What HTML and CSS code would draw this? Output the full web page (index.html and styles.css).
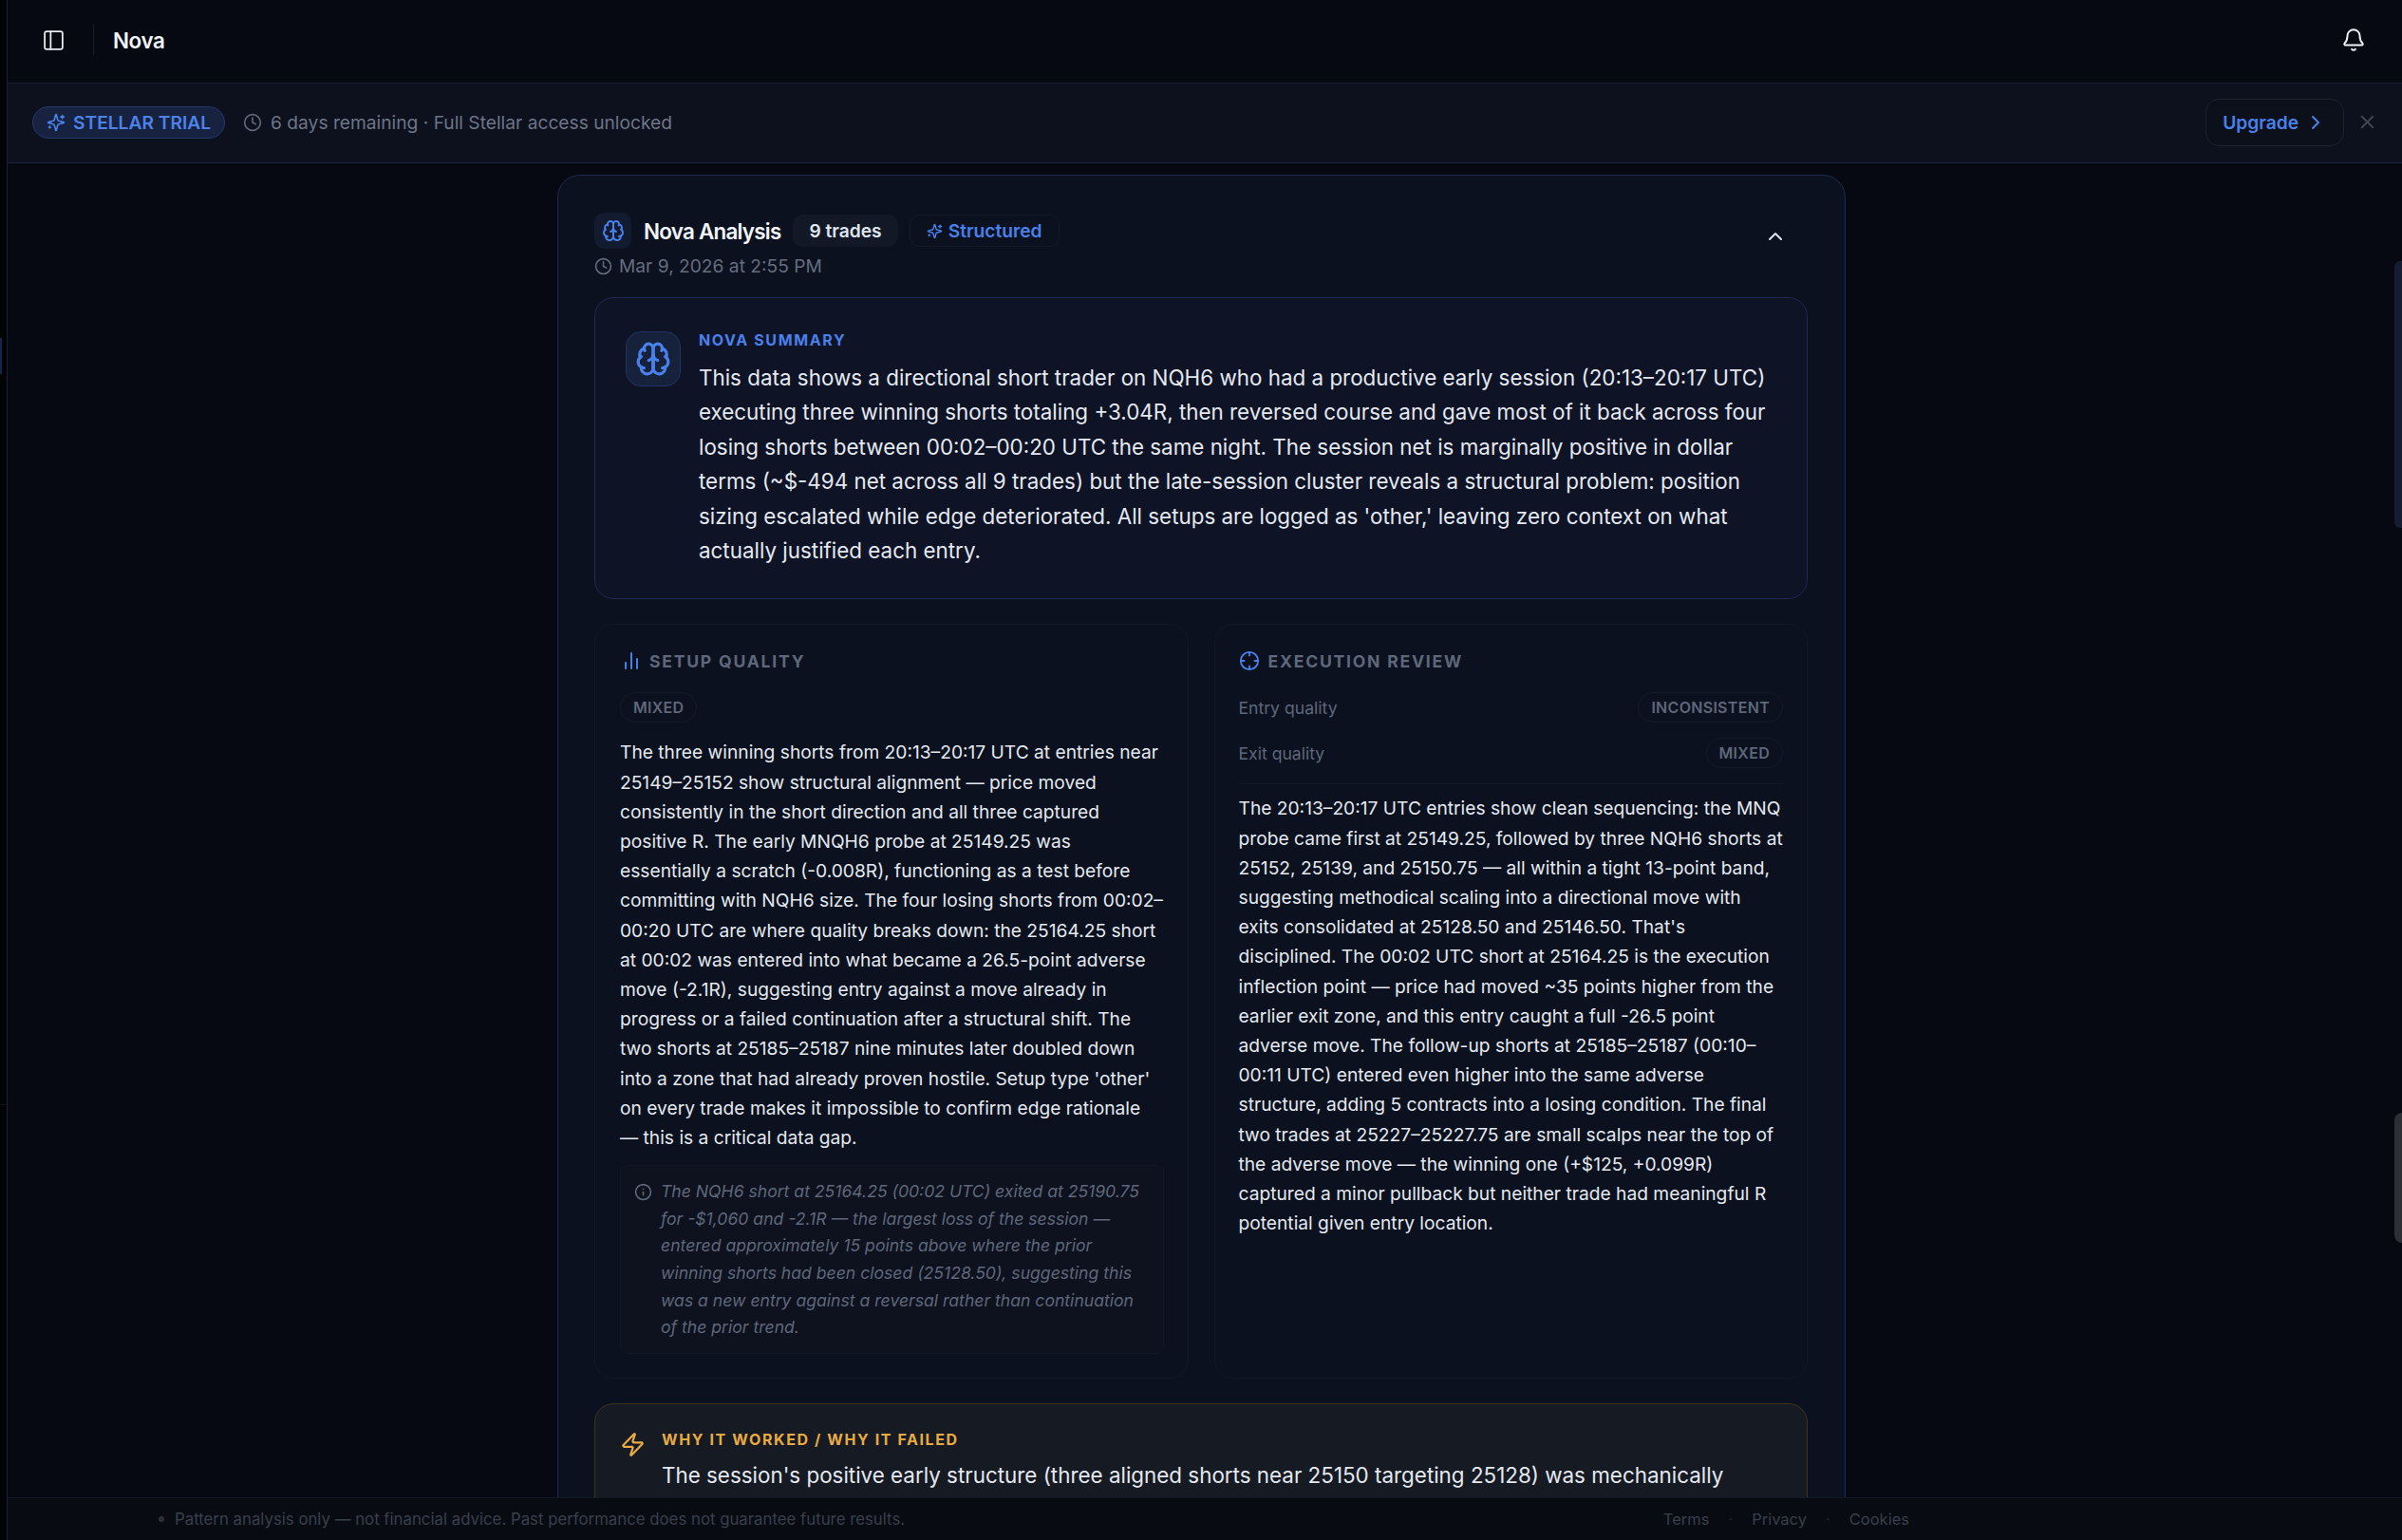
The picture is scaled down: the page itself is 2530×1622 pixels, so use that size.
FILE: index.html
```html
<!DOCTYPE html>
<html lang="en">
<head>
<meta charset="utf-8">
<title>Nova</title>
<link rel="stylesheet" href="styles.css">
</head>
<body>
<svg class="sprite" xmlns="http://www.w3.org/2000/svg">
  <symbol id="i-panel" viewBox="0 0 24 24"><rect x="3" y="3" width="18" height="18" rx="2"/><path d="M9 3v18"/></symbol>
  <symbol id="i-bell" viewBox="0 0 24 24"><path d="M10.268 21a2 2 0 0 0 3.464 0"/><path d="M3.262 15.326A1 1 0 0 0 4 17h16a1 1 0 0 0 .74-1.673C19.41 13.956 18 12.499 18 8A6 6 0 0 0 6 8c0 4.499-1.411 5.956-2.738 7.326"/></symbol>
  <symbol id="i-sparkles" viewBox="0 0 24 24"><path d="M9.937 15.5A2 2 0 0 0 8.5 14.063l-6.135-1.582a.5.5 0 0 1 0-.962L8.5 9.936A2 2 0 0 0 9.937 8.5l1.582-6.135a.5.5 0 0 1 .963 0L14.063 8.5A2 2 0 0 0 15.5 9.937l6.135 1.581a.5.5 0 0 1 0 .964L15.5 14.063a2 2 0 0 0-1.437 1.437l-1.582 6.135a.5.5 0 0 1-.963 0z"/><path d="M20 3v4"/><path d="M22 5h-4"/><path d="M4 17v2"/><path d="M5 18H3"/></symbol>
  <symbol id="i-clock" viewBox="0 0 24 24"><circle cx="12" cy="12" r="10"/><path d="M12 6v6l4 2"/></symbol>
  <symbol id="i-right" viewBox="0 0 24 24"><path d="m9 18 6-6-6-6"/></symbol>
  <symbol id="i-up" viewBox="0 0 24 24"><path d="m18 15-6-6-6 6"/></symbol>
  <symbol id="i-x" viewBox="0 0 24 24"><path d="M18 6 6 18"/><path d="m6 6 12 12"/></symbol>
  <symbol id="i-brain" viewBox="0 0 24 24"><path d="M12 5a3 3 0 1 0-5.997.125 4 4 0 0 0-2.526 5.77 4 4 0 0 0 .556 6.588A4 4 0 1 0 12 18Z"/><path d="M12 5a3 3 0 1 1 5.997.125 4 4 0 0 1 2.526 5.77 4 4 0 0 1-.556 6.588A4 4 0 1 1 12 18Z"/><path d="M15 13a4.5 4.5 0 0 1-3-4 4.5 4.5 0 0 1-3 4"/><path d="M17.599 6.5a3 3 0 0 0 .399-1.375"/><path d="M6.003 5.125A3 3 0 0 0 6.401 6.5"/><path d="M3.477 10.896a4 4 0 0 1 .585-.396"/><path d="M19.938 10.5a4 4 0 0 1 .585.396"/><path d="M6 18a4 4 0 0 1-1.967-.516"/><path d="M19.967 17.484A4 4 0 0 1 18 18"/><path d="M12 9v9"/></symbol>
  <symbol id="i-chart" viewBox="0 0 24 24"><path d="M18 20V10"/><path d="M12 20V4"/><path d="M6 20v-6"/></symbol>
  <symbol id="i-cross" viewBox="0 0 24 24"><circle cx="12" cy="12" r="10"/><path d="M22 12h-4"/><path d="M6 12H2"/><path d="M12 6V2"/><path d="M12 22v-4"/></symbol>
  <symbol id="i-info" viewBox="0 0 24 24"><circle cx="12" cy="12" r="10"/><path d="M12 16v-4"/><path d="M12 8h.01"/></symbol>
  <symbol id="i-zap" viewBox="0 0 24 24"><path d="M4 14a1 1 0 0 1-.78-1.63l9.9-10.2a.5.5 0 0 1 .86.46l-1.92 6.02A1 1 0 0 0 13 10h7a1 1 0 0 1 .78 1.63l-9.9 10.2a.5.5 0 0 1-.86-.46l1.92-6.02A1 1 0 0 0 11 14z"/></symbol>
</svg>

<div class="app">
  <aside class="rail"><span class="rail-mark"></span><span class="rail-line"></span></aside>
  <div class="shell">
    <header class="topbar">
      <div class="topbar-left">
        <svg class="ic ic-panel"><use href="#i-panel"/></svg>
        <span class="divider"></span>
        <span class="page-title">Nova</span>
      </div>
      <svg class="ic ic-bell"><use href="#i-bell"/></svg>
    </header>

    <div class="trial">
      <div class="trial-left">
        <span class="trial-pill"><svg class="ic ic-pill"><use href="#i-sparkles"/></svg>STELLAR TRIAL</span>
        <svg class="ic ic-clock"><use href="#i-clock"/></svg>
        <span class="trial-text">6 days remaining · Full Stellar access unlocked</span>
      </div>
      <div class="trial-right">
        <button class="upgrade">Upgrade<svg class="ic ic-right"><use href="#i-right"/></svg></button>
        <svg class="ic ic-x"><use href="#i-x"/></svg>
      </div>
    </div>

    <main class="scroll">
      <article class="card">
        <div class="card-head">
          <div>
            <div class="head-row">
              <span class="head-icon"><svg class="ic ic-brain-sm"><use href="#i-brain"/></svg></span>
              <span class="head-title">Nova Analysis</span>
              <span class="tag tag-fill">9 trades</span>
              <span class="tag tag-line"><svg class="ic ic-tag"><use href="#i-sparkles"/></svg>Structured</span>
            </div>
            <div class="date"><svg class="ic ic-date"><use href="#i-clock"/></svg>Mar 9, 2026 at 2:55 PM</div>
          </div>
          <svg class="ic ic-up"><use href="#i-up"/></svg>
        </div>

        <section class="summary">
          <span class="summary-icon"><svg class="ic ic-brain-lg"><use href="#i-brain"/></svg></span>
          <div>
            <div class="label label-blue">NOVA SUMMARY</div>
            <p class="lead">This data shows a directional short trader on NQH6 who had a productive early session (20:13–20:17 UTC) executing three winning shorts totaling +3.04R, then reversed course and gave most of it back across four losing shorts between 00:02–00:20 UTC the same night. The session net is marginally positive in dollar terms (~$-494 net across all 9 trades) but the late-session cluster reveals a structural problem: position sizing escalated while edge deteriorated. All setups are logged as 'other,' leaving zero context on what actually justified each entry.</p>
          </div>
        </section>

        <div class="columns">
          <section class="panel">
            <h3 class="panel-title"><svg class="ic ic-section"><use href="#i-chart"/></svg>SETUP QUALITY</h3>
            <div class="badge-row"><span class="badge">MIXED</span></div>
            <p class="body">The three winning shorts from 20:13–20:17 UTC at entries near 25149–25152 show structural alignment — price moved consistently in the short direction and all three captured positive R. The early MNQH6 probe at 25149.25 was essentially a scratch (-0.008R), functioning as a test before committing with NQH6 size. The four losing shorts from 00:02–00:20 UTC are where quality breaks down: the 25164.25 short at 00:02 was entered into what became a 26.5-point adverse move (-2.1R), suggesting entry against a move already in progress or a failed continuation after a structural shift. The two shorts at 25185–25187 nine minutes later doubled down into a zone that had already proven hostile. Setup type 'other' on every trade makes it impossible to confirm edge rationale —&nbsp;this is a critical data gap.</p>
            <div class="note">
              <svg class="ic ic-info"><use href="#i-info"/></svg>
              <p>The NQH6 short at 25164.25 (00:02 UTC) exited at 25190.75 for -$1,060 and -2.1R — the largest loss of the session — entered approximately 15 points above where the prior winning shorts had been closed (25128.50), suggesting this was a new entry against a reversal rather than continuation of the prior trend.</p>
            </div>
          </section>

          <section class="panel">
            <h3 class="panel-title"><svg class="ic ic-section ic-cross"><use href="#i-cross"/></svg>EXECUTION REVIEW</h3>
            <div class="quality-row"><span>Entry quality</span><span class="badge">INCONSISTENT</span></div>
            <div class="quality-row"><span>Exit quality</span><span class="badge">MIXED</span></div>
            <p class="body body-ruled">The 20:13–20:17 UTC entries show clean sequencing: the MNQ probe came first at 25149.25, followed by three NQH6 shorts at 25152, 25139, and 25150.75 — all within a tight 13-point band, suggesting methodical scaling into a directional move with exits consolidated at 25128.50 and 25146.50. That's disciplined. The 00:02 UTC short at 25164.25 is the execution inflection point — price had moved ~35 points higher from the earlier exit zone, and this entry caught a full -26.5 point adverse move. The follow-up shorts at 25185–25187 (00:10–00:11 UTC) entered even higher into the same adverse structure, adding 5 contracts into a losing condition. The final two trades at 25227–25227.75 are small scalps near the top of the adverse move — the winning one (+$125, +0.099R) captured a minor pullback but neither trade had meaningful R potential given entry location.</p>
          </section>
        </div>

        <section class="why">
          <svg class="ic ic-zap"><use href="#i-zap"/></svg>
          <div>
            <div class="label label-amber">WHY IT WORKED / WHY IT FAILED</div>
            <p class="lead">The session's positive early structure (three aligned shorts near 25150 targeting 25128) was mechanically</p>
          </div>
        </section>
      </article>
    </main>

    <footer class="footer">
      <div class="disclaimer"><span class="dot"></span>Pattern analysis only — not financial advice. Past performance does not guarantee future results.</div>
      <nav class="links"><span>Terms</span><i>·</i><span>Privacy</span><i>·</i><span>Cookies</span></nav>
    </footer>
  </div>
  <span class="thumb thumb-a"></span>
  <span class="thumb thumb-b"></span>
</div>
</body>
</html>
```

FILE: styles.css
```css
* { box-sizing: border-box; }
html, body { margin: 0; height: 100%; }
body { background: #060911; color: #f1f4fa; font-family: Inter, "Liberation Sans", sans-serif; overflow: hidden; }
.sprite { position: absolute; width: 0; height: 0; }
.ic { fill: none; stroke: currentColor; stroke-width: 2; stroke-linecap: round; stroke-linejoin: round; flex: none; display: block; }

.app { display: flex; height: 1622px; position: relative; }
.rail { width: 8px; background: #020306; border-right: 1px solid #1a2030; flex: none; position: relative; }
.rail-mark { position: absolute; left: 0; top: 356px; width: 2px; height: 38px; background: #14254d; }
.rail-line { position: absolute; left: 0; right: 0; top: 1163px; height: 1px; background: #0c101a; }
.shell { flex: 1; min-width: 0; display: flex; flex-direction: column; }

.topbar { height: 88px; flex: none; display: flex; align-items: center; justify-content: space-between; padding: 0 38px 3px 36px; border-bottom: 1px solid #171d2e; }
.topbar-left { display: flex; align-items: center; }
.ic-panel { width: 25px; height: 25px; color: #e8ecf3; stroke-width: 1.7; }
.divider { width: 1px; height: 32px; background: #171d2e; margin: 0 20px 0 29px; }
.page-title { font-size: 22.4px; font-weight: 600; letter-spacing: -0.4px; }
.ic-bell { width: 26px; height: 26px; color: #eef1f6; stroke-width: 1.8; }

.trial { height: 84px; flex: none; display: flex; align-items: center; justify-content: space-between; padding: 0 25px 2px 26px; background: #0c111d; border-bottom: 1px solid #1a2338; }
.trial-left, .trial-right { display: flex; align-items: center; }
.trial-pill { display: flex; align-items: center; height: 34px; padding: 0 14px 0 14px; border-radius: 17px; border: 1px solid #26396a; background: #16223f; color: #4c82e9; font-size: 19.2px; font-weight: 600; }
.ic-pill { width: 20px; height: 20px; margin-right: 8px; }
.ic-clock { width: 20px; height: 20px; color: #5e6678; margin: 0 9px 0 19px; }
.trial-text { font-size: 19.2px; color: #6d7587; }
.upgrade { display: flex; align-items: center; height: 50px; padding: 0 17px; background: #0b101b; border: 1px solid #1c2230; border-radius: 14px; color: #4a80ea; font: 600 19.2px Inter, sans-serif; }
.ic-right { width: 24px; height: 24px; margin-left: 6px; }
.ic-x { width: 23px; height: 23px; color: #3f4553; margin-left: 13px; }

.scroll { flex: 1; min-height: 0; overflow: hidden; padding-top: 12px; display: flex; justify-content: center; }
.card { width: 1357px; margin-left: -7px; flex: none; align-self: flex-start; padding: 39px 39px 40px 38px; background: #0b111e; border: 1px solid #1c2a4d; border-radius: 24px; }

.card-head { display: flex; justify-content: space-between; align-items: flex-start; }
.head-row { display: flex; align-items: center; }
.head-icon { width: 39px; height: 38px; border-radius: 10px; background: #121b30; color: #4a80ea; display: flex; align-items: center; justify-content: center; margin-right: 13px; }
.ic-brain-sm { width: 24px; height: 24px; stroke-width: 2; }
.head-title { font-size: 22.4px; font-weight: 600; letter-spacing: -0.75px; margin-right: 13px; }
.tag { height: 34px; border-radius: 10px; display: flex; align-items: center; font-size: 19.2px; font-weight: 600; padding: 0 17px; }
.tag-fill { background: #121826; color: #dfe4ee; margin-right: 12px; }
.tag-line { border: 1px solid #141b2a; color: #4a80ea; }
.ic-tag { width: 17px; height: 17px; margin-right: 6px; }
.date { display: flex; align-items: center; color: #656d7f; font-size: 19.2px; margin-top: 6px; height: 24px; }
.ic-date { width: 19px; height: 19px; margin-right: 7px; }
.ic-up { width: 24px; height: 24px; color: #dfe4ee; margin: 13px 22px 0 0; }

.summary { display: flex; margin-top: 21px; padding: 32px 32px 32px; background: #0e1326; border: 1px solid #1d2b50; border-radius: 20px; }
.summary-icon { width: 58px; height: 58px; flex: none; margin: 3px 19px 0 0; border-radius: 16px; background: #16213c; border: 1px solid #22345f; color: #4a80ea; display: flex; align-items: center; justify-content: center; }
.ic-brain-lg { width: 38px; height: 38px; }
.label { font-size: 16px; font-weight: 700; letter-spacing: 1.6px; line-height: 24px; }
.label-blue { color: #4a80ea; }
.label-amber { color: #e8ab42; }
.lead { margin: 10px 0 0; font-size: 22.4px; line-height: 36.4px; color: #e4e8f0; }

.columns { display: grid; grid-template-columns: 1fr 1fr; gap: 27px; margin-top: 26px; }
.panel { padding: 23px 25px 25px; border: 1px solid #121826; border-radius: 20px; background: #0b111e; min-width: 0; }
.panel:first-child { padding-right: 24px; padding-left: 26px; }
.panel-title { margin: 0; display: flex; align-items: center; height: 30px; font-size: 17.6px; font-weight: 700; letter-spacing: 1.76px; color: #5f677a; }
.ic-section { width: 24px; height: 24px; margin-right: 7px; color: #4a80ea; }
.panel-title .ic-cross { width: 22px; height: 22px; margin-right: 9px; }
.badge-row { margin-top: 18px; display: flex; }
.badge { height: 32px; display: inline-flex; align-items: center; padding: 0 13px; border: 1px solid #141b2a; border-radius: 16px; font-size: 16px; font-weight: 600; letter-spacing: 0.3px; color: #5f677a; }
.quality-row { display: flex; align-items: center; justify-content: space-between; height: 32px; margin-top: 16px; color: #5f677a; font-size: 17.6px; }
.quality-row:first-of-type { margin-top: 18px; }
.body { margin: 16px 0 0; font-size: 19.2px; line-height: 31.2px; color: #e4e8f0; }
.body-ruled { margin-top: 16px; padding-top: 10px; border-top: 1px solid #121826; }
.note { display: flex; margin-top: 13px; margin-right: 1px; padding: 13px 12px 12px 14px; background: #0d121e; border: 1px solid #121826; border-radius: 8px; color: #5f677a; }
.ic-info { width: 19px; height: 19px; margin: 5px 9px 0 0; }
.note p { margin: 0; font-size: 17.6px; line-height: 28.6px; font-style: italic; }

.why { display: flex; margin-top: 26px; padding: 25px 26px 24px; background: #161a23; border: 1px solid #40341f; border-radius: 20px; }
.why .lead { white-space: nowrap; margin-top: 8px; }
.ic-zap { width: 27px; height: 27px; color: #e8ab42; margin: 4px 17px 0 0; }

.footer { height: 45px; flex: none; display: flex; align-items: center; justify-content: space-between; padding: 0 519px 0 159px; background: #080b12; border-top: 1px solid #121826; position: relative; font-size: 16.8px; color: #3a3f4c; }
.disclaimer { display: flex; align-items: center; }
.dot { width: 6px; height: 6px; border-radius: 50%; background: #2b303b; margin-right: 11px; }
.links { display: flex; align-items: center; gap: 20px; font-size: 16.5px; }
.links i { font-style: normal; color: #232732; }

.thumb { position: absolute; right: 0; width: 8px; border-radius: 6px 0 0 6px; }
.thumb-a { top: 275px; height: 281px; background: #161d33; }
.thumb-b { top: 1172px; height: 137px; background: #2e2e35; border-radius: 10px 0 0 10px; }
```
